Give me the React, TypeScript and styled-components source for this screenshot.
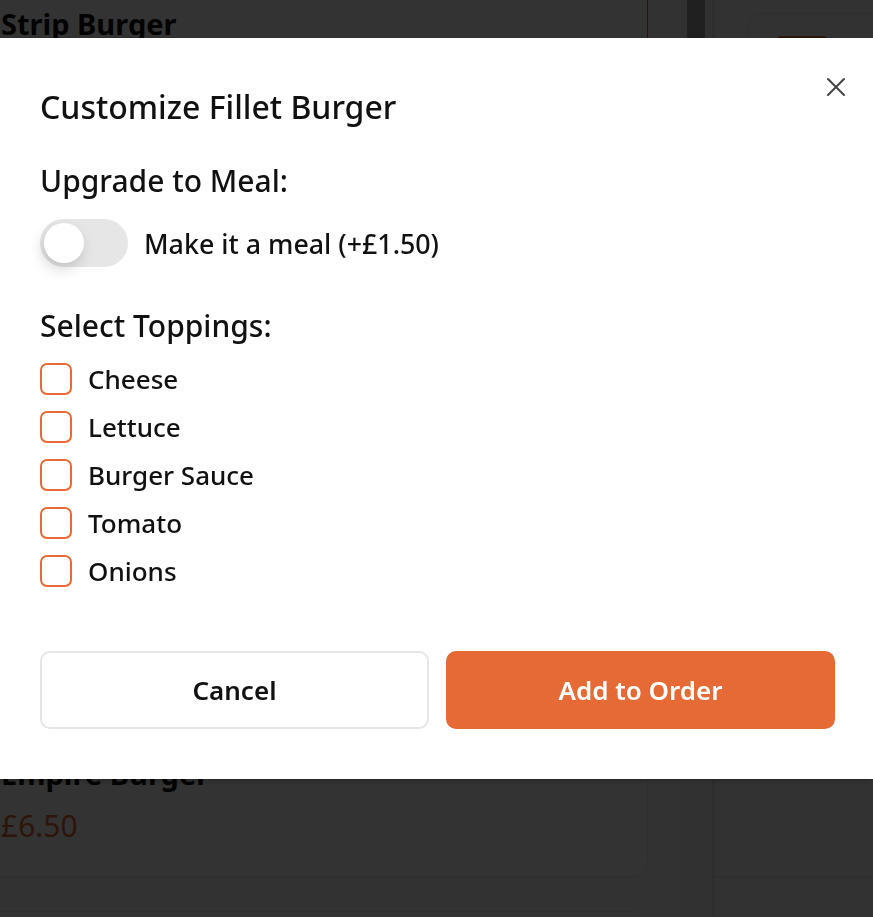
import React, { useState } from "react";
import styled, { createGlobalStyle } from "styled-components";

const GlobalStyle = createGlobalStyle`
  html, body { margin: 0; padding: 0; height: 100%; overflow: hidden; }
  body { font-family: "Noto Sans", "Open Sans", sans-serif; background: #fafafa; color: #111; }
  * { box-sizing: border-box; }
`;

const ORANGE = "#e56a36";

/* ---------- background page ---------- */
const Page = styled.div`
  display: flex;
  width: 873px;
  height: 917px;
  background: #fbfbfb;
  overflow: hidden;
`;

const MenuColumn = styled.div`
  width: 706px;
  flex-shrink: 0;
  display: flex;
  flex-direction: column;
  gap: 34px;
  margin-left: -24px;
`;

const Card = styled.div<{ $active?: boolean; $h: number; $top?: number; $end?: boolean }>`
  width: 672px;
  height: ${(p) => p.$h}px;
  flex-shrink: 0;
  margin-top: ${(p) => p.$top ?? 0}px;
  background: #fff;
  border: 1px solid ${(p) => (p.$active ? ORANGE : "#ececec")};
  border-radius: 14px;
  padding: ${(p) => (p.$end ? "0 24px 32px" : "185px 24px 0")};
  display: flex;
  flex-direction: column;
  justify-content: ${(p) => (p.$end ? "flex-end" : "flex-start")};
  gap: 16px;
`;

const CardTitle = styled.div`
  font-size: 29px;
  line-height: 36px;
  font-weight: 700;
  color: #111;
`;

const CardPrice = styled.div`
  font-size: 30px;
  line-height: 36px;
  color: ${ORANGE};
`;

const ScrollTrack = styled.div`
  width: 30px;
  flex-shrink: 0;
  background: #f6f6f6;
  padding: 0 7px 0 5px;
`;

const ScrollThumb = styled.div`
  height: 300px;
  background: #a0a0a0;
`;

const Sidebar = styled.div`
  flex: 1;
  border-left: 3px solid #e6e6e6;
  display: flex;
  flex-direction: column;
  padding: 13px 0 0 33px;
`;

const SideBox = styled.div`
  height: 120px;
  border: 1px solid #e4e4e4;
  border-right: none;
  border-radius: 14px 0 0 14px;
  padding: 22px 0 0 28px;
`;

const SideBadge = styled.div`
  width: 50px;
  height: 20px;
  background: ${ORANGE};
  border-radius: 4px;
`;

const SideDivider = styled.div`
  margin-top: 743px;
  margin-left: -33px;
  border-top: 2px solid #e8e8e8;
`;

/* ---------- overlay & modal ---------- */
const Overlay = styled.div`
  position: fixed;
  inset: 0;
  background: rgba(0, 0, 0, 0.8);
  display: flex;
  justify-content: center;
  align-items: flex-start;
  padding-top: 38px;
`;

const Modal = styled.div`
  position: relative;
  width: 873px;
  background: #fff;
  padding: 49px 38px 50px 40px;
  box-shadow: 0 2px 6px rgba(0, 0, 0, 0.25);
  color: #111;
  font-family: "Noto Sans", "Open Sans", sans-serif;
`;

const CloseButton = styled.button`
  position: absolute;
  top: 36px;
  right: 24px;
  width: 26px;
  height: 26px;
  border: none;
  background: none;
  padding: 0;
  cursor: pointer;
  display: flex;
  align-items: center;
  justify-content: center;
`;

const Title = styled.h2`
  margin: 0;
  font-size: 32px;
  font-weight: 500;
  line-height: 40px;
`;

const SectionTitle = styled.h3`
  margin: 0;
  font-size: 30px;
  font-weight: 500;
  line-height: 40px;
`;

const Section = styled.section<{ $top: number }>`
  margin-top: ${(p) => p.$top}px;
  display: flex;
  flex-direction: column;
`;

const ToggleRow = styled.label`
  display: flex;
  align-items: center;
  gap: 16px;
  margin-top: 18px;
  font-size: 26.8px;
  font-weight: 500;
  cursor: pointer;
`;

const Track = styled.span<{ $on: boolean }>`
  position: relative;
  width: 88px;
  height: 48px;
  border-radius: 24px;
  background: ${(p) => (p.$on ? ORANGE : "#e6e6e6")};
  flex-shrink: 0;
`;

const Knob = styled.span<{ $on: boolean }>`
  position: absolute;
  top: 4px;
  left: ${(p) => (p.$on ? 44 : 4)}px;
  width: 40px;
  height: 40px;
  border-radius: 50%;
  background: #fff;
  box-shadow: -2px 6px 14px rgba(0, 0, 0, 0.16);
`;

const ToppingList = styled.div`
  display: flex;
  flex-direction: column;
  gap: 16px;
  margin-top: 17px;
`;

const ToppingRow = styled.label`
  display: flex;
  align-items: center;
  gap: 16px;
  font-size: 26px;
  font-weight: 500;
  height: 32px;
  cursor: pointer;
`;

const Box = styled.span<{ $on: boolean }>`
  width: 32px;
  height: 32px;
  border: 2px solid ${ORANGE};
  border-radius: 7px;
  background: ${(p) => (p.$on ? ORANGE : "#fff")};
  flex-shrink: 0;
`;

const Actions = styled.div`
  display: grid;
  grid-template-columns: 1fr 1fr;
  gap: 17px;
  margin-top: 64px;
`;

const Button = styled.button<{ $primary?: boolean }>`
  height: 78px;
  border-radius: 10px;
  font-family: inherit;
  font-size: 26px;
  font-weight: 600;
  cursor: pointer;
  border: 2px solid ${(p) => (p.$primary ? ORANGE : "#e6e6e6")};
  background: ${(p) => (p.$primary ? ORANGE : "#fff")};
  color: ${(p) => (p.$primary ? "#fff" : "#111")};
`;

const toppings = ["Cheese", "Lettuce", "Burger Sauce", "Tomato", "Onions"];

export default function App() {
  const [meal, setMeal] = useState(false);
  const [sel, setSel] = useState<Record<string, boolean>>({});

  return (
    <>
      <GlobalStyle />
      <Page>
        <MenuColumn>
          <Card $active $h={580} $top={-180}>
            <CardTitle>Strip Burger</CardTitle>
          </Card>
          <Card $h={443} $end>
            <CardTitle>Empire Burger</CardTitle>
            <CardPrice>£6.50</CardPrice>
          </Card>
          <Card $h={200} />
        </MenuColumn>
        <ScrollTrack>
          <ScrollThumb />
        </ScrollTrack>
        <Sidebar>
          <SideBox>
            <SideBadge />
          </SideBox>
          <SideDivider />
        </Sidebar>
      </Page>
      <Overlay>
        <Modal role="dialog" aria-label="Customize Fillet Burger">
          <CloseButton aria-label="Close">
            <svg width="20" height="20" viewBox="0 0 20 20" fill="none" stroke="#444" strokeWidth="2" strokeLinecap="round">
              <path d="M2 2 L18 18 M18 2 L2 18" />
            </svg>
          </CloseButton>
          <Title>Customize Fillet Burger</Title>
          <Section $top={34}>
            <SectionTitle>Upgrade to Meal:</SectionTitle>
            <ToggleRow onClick={() => setMeal(!meal)}>
              <Track $on={meal}>
                <Knob $on={meal} />
              </Track>
              Make it a meal (+£1.50)
            </ToggleRow>
          </Section>
          <Section $top={39}>
            <SectionTitle>Select Toppings:</SectionTitle>
            <ToppingList>
              {toppings.map((t) => (
                <ToppingRow key={t} onClick={() => setSel({ ...sel, [t]: !sel[t] })}>
                  <Box $on={!!sel[t]} />
                  {t}
                </ToppingRow>
              ))}
            </ToppingList>
          </Section>
          <Actions>
            <Button>Cancel</Button>
            <Button $primary>Add to Order</Button>
          </Actions>
        </Modal>
      </Overlay>
    </>
  );
}
